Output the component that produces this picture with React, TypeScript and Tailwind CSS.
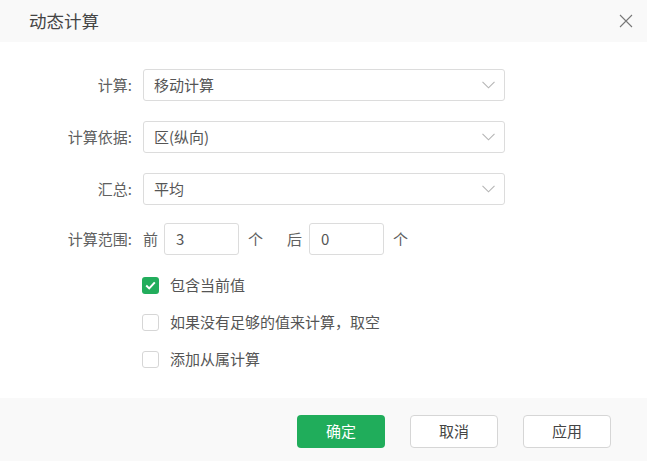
import React, { useState } from 'react';

const font = { fontFamily: '"Noto Sans CJK SC", "Noto Sans", sans-serif' };

function Chevron() {
  return (
    <svg width="13" height="8" viewBox="0 0 13 8" fill="none" className="text-[#b5b5b5]">
      <path d="M0.5 0.8 L6.5 6.8 L12.5 0.8" stroke="currentColor" strokeWidth="1.1" />
    </svg>
  );
}

function SelectRow({ label, value }: { label: string; value: string }) {
  return (
    <div className="flex items-center h-8">
      <div className="w-[132px] shrink-0 text-right text-[15px] text-[#606060]">{label}</div>
      <div className="ml-[11px] w-[362px] h-8 border border-[#dcdcdc] rounded-[3px] flex items-center justify-between pl-[10px] pr-[9px]">
        <span className="text-[15px] text-[#555]">{value}</span>
        <Chevron />
      </div>
    </div>
  );
}

function Checkbox({ checked, label, onToggle }: { checked: boolean; label: string; onToggle: () => void }) {
  return (
    <div className="flex items-center h-[18px] cursor-pointer" onClick={onToggle}>
      {checked ? (
        <div className="w-[17px] h-[17px] rounded-[3px] bg-[#22ad5c] flex items-center justify-center">
          <svg width="11" height="9" viewBox="0 0 11 9" fill="none">
            <path d="M1.2 4.6 L4.2 7.4 L9.8 1.4" stroke="white" strokeWidth="2" />
          </svg>
        </div>
      ) : (
        <div className="w-[17px] h-[17px] rounded-[3px] border border-[#d6d6d6] bg-white" />
      )}
      <span className="ml-[11px] text-[15px] text-[#555]">{label}</span>
    </div>
  );
}

export default function App() {
  const [checks, setChecks] = useState([true, false, false]);
  const toggle = (i: number) => setChecks(c => c.map((v, j) => (j === i ? !v : v)));

  return (
    <div className="w-[647px] h-[461px] bg-white flex flex-col overflow-hidden" style={font}>
      <div className="h-[42px] bg-[#f9f9f9] flex items-center justify-between pl-[29px] pr-[14px] shrink-0">
        <span className="text-[17.5px] text-[#444]">动态计算</span>
        <svg width="14" height="14" viewBox="0 0 14 14" fill="none">
          <path d="M1 1 L13 13 M13 1 L1 13" stroke="#777" strokeWidth="1.1" />
        </svg>
      </div>

      <div className="flex-1 flex flex-col pt-[27px]">
        <div className="flex flex-col gap-5">
          <SelectRow label="计算:" value="移动计算" />
          <SelectRow label="计算依据:" value="区(纵向)" />
          <SelectRow label="汇总:" value="平均" />
        </div>

        <div className="flex items-center h-8 mt-[18px] text-[15px] text-[#606060]">
          <div className="w-[132px] shrink-0 text-right">计算范围:</div>
          <span className="ml-[11px]">前</span>
          <div className="ml-[6px] w-[75px] h-8 border border-[#dcdcdc] rounded-[3px] flex items-center pl-[11px] text-[#555]">3</div>
          <span className="ml-[9px]">个</span>
          <span className="ml-[24px]">后</span>
          <div className="ml-[7px] w-[75px] h-8 border border-[#dcdcdc] rounded-[3px] flex items-center pl-[11px] text-[#555]">0</div>
          <span className="ml-[9px]">个</span>
        </div>

        <div className="flex flex-col gap-[19px] mt-[21px] pl-[142px]">
          <Checkbox checked={checks[0]} label="包含当前值" onToggle={() => toggle(0)} />
          <Checkbox checked={checks[1]} label="如果没有足够的值来计算，取空" onToggle={() => toggle(1)} />
          <Checkbox checked={checks[2]} label="添加从属计算" onToggle={() => toggle(2)} />
        </div>
      </div>

      <div className="h-[63px] bg-[#f9f9f9] flex items-start justify-end gap-[25px] pr-[36px] pt-[17px] shrink-0">
        <button className="w-[88px] h-[33px] rounded-[4px] bg-[#20ad5b] text-white text-[15px]">确定</button>
        <button className="w-[88px] h-[33px] rounded-[4px] border border-[#d6d6d6] bg-white text-[#444] text-[15px]">取消</button>
        <button className="w-[88px] h-[33px] rounded-[4px] border border-[#d6d6d6] bg-white text-[#444] text-[15px]">应用</button>
      </div>
    </div>
  );
}
